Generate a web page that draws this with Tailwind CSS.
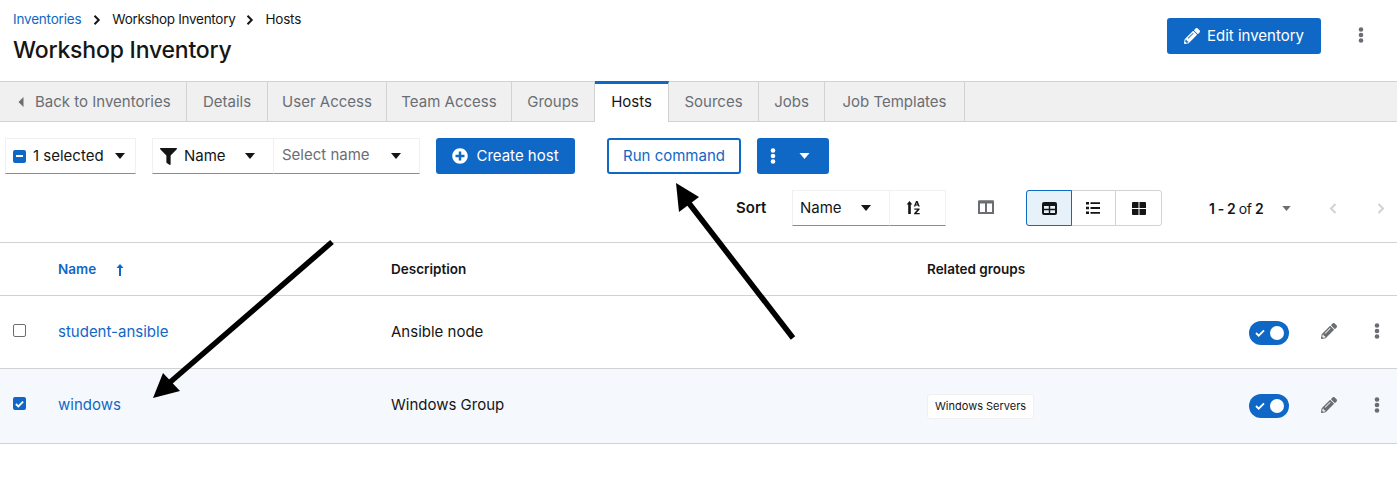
<!doctype html>
<html>
<head>
<meta charset="utf-8">
<script src="https://cdn.jsdelivr.net/npm/@tailwindcss/browser@4"></script>
</head>
<body class="m-0 bg-white font-['Inter','Noto_Sans',sans-serif] text-[15px] text-[#151515]">
<div class="relative w-[1397px] h-[482px] overflow-hidden">

<!-- header -->
<header class="flex h-[81px] justify-between">
  <div class="pl-[13px] pt-[11px]">
    <nav class="flex items-center h-[17px] text-[13.5px] tracking-[-0.2px]">
      <a class="text-[#1068c6]">Inventories</a>
      <svg class="ml-[12px] mr-[11px] w-[8px] h-[10px]" viewBox="0 0 8 10"><path d="M1.5 .8 5.7 5 1.5 9.2" fill="none" stroke="#151515" stroke-width="2"/></svg>
      <span class="tracking-[-0.3px]">Workshop Inventory</span>
      <svg class="mx-[11px] w-[8px] h-[10px]" viewBox="0 0 8 10"><path d="M1.5 .8 5.7 5 1.5 9.2" fill="none" stroke="#151515" stroke-width="2"/></svg>
      <span>Hosts</span>
    </nav>
    <h1 class="mt-[7px] text-[23px] leading-[30px] font-medium tracking-[-0.2px] text-[#151515]">Workshop Inventory</h1>
  </div>
  <div class="flex items-start pt-[18px] pr-[33px]">
    <button class="flex items-center justify-center gap-[7px] w-[154px] h-[36px] rounded-[3px] bg-[#1068c6] text-white">
      <svg class="w-[16px] h-[16px]" viewBox="0 0 512 512" fill="#fff"><path d="M497.9 142.1l-46.1 46.1c-4.7 4.7-12.3 4.7-17 0l-111-111c-4.7-4.7-4.7-12.3 0-17l46.1-46.1c18.7-18.7 49.1-18.7 67.9 0l60.1 60.1c18.8 18.7 18.8 49.1 0 67.9zM284.2 99.8L21.6 362.4.4 483.9c-2.9 16.4 11.4 30.6 27.8 27.8l121.5-21.3 262.6-262.6c4.7-4.7 4.7-12.3 0-17l-111-111c-4.8-4.7-12.4-4.7-17.1 0zM124.1 339.9c-5.5-5.5-5.5-14.3 0-19.8l154-154c5.5-5.5 14.3-5.5 19.8 0s5.5 14.3 0 19.8l-154 154c-5.5 5.5-14.3 5.5-19.8 0zM88 424h48v36.3l-64.5 11.3-31.1-31.1L51.7 376H88v48z"/></svg>
      Edit inventory
    </button>
    <svg class="ml-[37px] mt-[9px] w-[6px] h-[16px]" viewBox="0 0 6 16" fill="#6a6e73"><circle cx="3" cy="2.5" r="2.3"/><circle cx="3" cy="8" r="2.3"/><circle cx="3" cy="13.5" r="2.3"/></svg>
  </div>
</header>

<!-- tabs -->
<div class="flex h-[41px] bg-[#f0f0f0] border-y border-[#d2d2d2] text-[#6a6e73]">
  <div class="flex items-center gap-[11px] w-[187px] pl-[18px] pt-px border-r border-[#d2d2d2]">
    <svg class="w-[6px] h-[10px]" viewBox="0 0 6 10" fill="#6a6e73"><path d="M5.5 0v10L.5 5z"/></svg>
    <span>Back to Inventories</span>
  </div>
  <div class="flex items-center justify-center w-[81px] pt-px border-r border-[#d2d2d2]">Details</div>
  <div class="flex items-center justify-center w-[119px] pt-px border-r border-[#d2d2d2]">User Access</div>
  <div class="flex items-center justify-center w-[125px] pt-px border-r border-[#d2d2d2]">Team Access</div>
  <div class="flex items-center justify-center w-[83px] pt-px border-r border-[#d2d2d2]">Groups</div>
  <div class="relative z-10 flex items-center justify-center w-[74px] h-[41px] -mt-px pb-[2px] bg-white border-t-[3px] border-t-[#1068c6] border-r border-r-[#d2d2d2] text-[#151515]">Hosts</div>
  <div class="flex items-center justify-center w-[90px] pt-px border-r border-[#d2d2d2]">Sources</div>
  <div class="flex items-center justify-center w-[66px] pt-px border-r border-[#d2d2d2]">Jobs</div>
  <div class="flex items-center justify-center w-[140px] pt-px border-r border-[#d2d2d2]">Job Templates</div>
</div>

<!-- toolbar row 1 -->
<div class="flex items-start h-[36px] mt-[16px] pl-[5px]">
  <div class="flex items-center w-[131px] h-[36px] border border-[#f0f0f0] border-b-[#8a8d90] pl-[7px]">
    <span class="flex items-center justify-center w-[13px] h-[13px] rounded-[2px] bg-[#1068c6]"><span class="block w-[7px] h-[2px] bg-white"></span></span>
    <span class="ml-[7px]">1 selected</span>
    <svg class="ml-auto mr-[10px] w-[10px] h-[6px]" viewBox="0 0 10 6"><path d="M0 0h10L5 6z" fill="#151515"/></svg>
  </div>
  <div class="flex items-center w-[122px] h-[36px] ml-[16px] border border-[#f0f0f0] border-b-[#8a8d90] pl-[7px]">
    <svg class="w-[17px] h-[17px]" viewBox="0 0 512 512" fill="#151515"><path d="M487.976 0H24.028C2.71 0-8.047 25.866 7.058 40.971L192 225.941V432c0 7.831 3.821 15.17 10.237 19.662l80 55.98C298.02 518.69 320 507.493 320 487.98V225.941l184.947-184.97C520.021 25.896 509.338 0 487.976 0z"/></svg>
    <span class="ml-[7px]">Name</span>
    <svg class="ml-auto mr-[18px] w-[10px] h-[6px]" viewBox="0 0 10 6"><path d="M0 0h10L5 6z" fill="#151515"/></svg>
  </div>
  <div class="flex items-center w-[146px] h-[36px] border border-l-0 border-[#f0f0f0] border-b-[#8a8d90] pl-[8px]">
    <span class="text-[#6a6e73] mb-px">Select name</span>
    <svg class="ml-auto mr-[18px] w-[10px] h-[6px]" viewBox="0 0 10 6"><path d="M0 0h10L5 6z" fill="#151515"/></svg>
  </div>
  <button class="flex items-center justify-center gap-[8px] ml-[16px] w-[139px] h-[36px] rounded-[3px] bg-[#1068c6] text-white">
    <svg class="w-[16px] h-[16px]" viewBox="0 0 512 512" fill="#fff"><path d="M256 8C119 8 8 119 8 256s111 248 248 248 248-111 248-248S393 8 256 8zm144 276c0 6.6-5.4 12-12 12h-92v92c0 6.6-5.4 12-12 12h-56c-6.6 0-12-5.4-12-12v-92h-92c-6.6 0-12-5.4-12-12v-56c0-6.6 5.4-12 12-12h92v-92c0-6.6 5.4-12 12-12h56c6.6 0 12 5.4 12 12v92h92c6.6 0 12 5.4 12 12v56z"/></svg>
    Create host
  </button>
  <button class="ml-[32px] w-[134px] h-[36px] rounded-[3px] border-2 border-[#1068c6] bg-white text-[#1068c6]">Run command</button>
  <button class="flex items-center ml-[16px] w-[72px] h-[36px] rounded-[3px] bg-[#1068c6] pl-[13px]">
    <svg class="w-[6px] h-[16px]" viewBox="0 0 6 16" fill="#fff"><circle cx="3" cy="2.5" r="2.3"/><circle cx="3" cy="8" r="2.3"/><circle cx="3" cy="13.5" r="2.3"/></svg>
    <svg class="ml-[23px] w-[11px] h-[6px]" viewBox="0 0 10 6"><path d="M0 0h10L5 6z" fill="#fff"/></svg>
  </button>
</div>

<!-- toolbar row 2 -->
<div class="flex items-center h-[36px] mt-[16px] pl-[736px]">
  <span class="w-[33px] font-semibold whitespace-nowrap">Sort</span>
  <div class="flex items-center w-[98px] h-[36px] ml-[23px] border border-[#f0f0f0] border-b-[#8a8d90] pl-[7px]">
    <span>Name</span>
    <svg class="ml-auto mr-[18px] w-[10px] h-[6px]" viewBox="0 0 10 6"><path d="M0 0h10L5 6z" fill="#151515"/></svg>
  </div>
  <div class="flex items-center w-[56px] h-[36px] pl-[16px] border border-l-0 border-[#f0f0f0] border-b-[#8a8d90]">
    <svg class="w-[15px] h-[15px] mb-[2px]" viewBox="0 0 15 15" fill="#151515"><path d="M3.5 1 6.4 4.6H4.8V14H2.2V4.6H.6z"/><path d="M10 1h1.600l2.200 5.600h-1.500l-.3-1h-2.400l-.3 1H7.800zM10.800 2.800l-.6 1.800h1.200zM8.300 8.500h5.300v1.100L10.500 13h3.200v1.300H8.100v-1.100L11.200 9.800H8.300z"/></svg>
  </div>
  <svg class="ml-[32px] w-[16px] h-[14px] mb-[2px]" viewBox="0 0 16 14" fill="none" stroke="#6a6e73" stroke-width="2"><path d="M1 1.500h14v11.500H1z"/><path d="M8 1.500V13"/><path d="M1 2h14" stroke-width="3"/></svg>
  <div class="flex ml-[32px] h-[36px] w-[136px] rounded-[3px] border border-[#d2d2d2]">
    <span class="-m-px flex items-center justify-center w-[46px] h-[36px] rounded-l-[3px] border border-[#1068c6] bg-[#e7f1fa]">
      <svg class="w-[15px] h-[13px]" viewBox="0 0 15 13" fill="#151515"><path fill-rule="evenodd" d="M2 0h11a2 2 0 0 1 2 2v9a2 2 0 0 1-2 2H2a2 2 0 0 1-2-2V2a2 2 0 0 1 2-2zM2 4v2.800h4.800V4zm6.200 0v2.800H13V4zM2 8.200V11h4.800V8.200zm6.200 0V11H13V8.200z"/></svg>
    </span>
    <span class="flex items-center justify-center w-[45px] border-r border-[#d2d2d2]">
      <svg class="w-[14px] h-[12px]" viewBox="0 0 14 12" fill="#151515"><path d="M0 0h3v2.400H0zM4.500.300H14v1.800H4.500zM0 4.800h3v2.400H0zM4.500 5.100H14v1.800H4.500zM0 9.600h3V12H0zM4.500 9.900H14v1.800H4.500z"/></svg>
    </span>
    <span class="flex items-center justify-center flex-1">
      <svg class="w-[14px] h-[13px]" viewBox="0 0 14 13" fill="#151515"><path d="M1 0h5.500v6H0V1a1 1 0 0 1 1-1zM7.500 0H13a1 1 0 0 1 1 1v5H7.500zM0 7h6.500v6H1a1 1 0 0 1-1-1zM7.500 7H14v5a1 1 0 0 1-1 1H7.500z"/></svg>
    </span>
  </div>
  <span class="w-[54px] ml-[47px] text-[14px] tracking-[-0.4px] whitespace-nowrap"><b class="font-semibold">1 - 2</b> of <b class="font-semibold">2</b></span>
  <svg class="ml-[19px] w-[9px] h-[5px]" viewBox="0 0 10 6"><path d="M0 0h10L5 6z" fill="#6a6e73"/></svg>
  <svg class="ml-[38px] w-[8px] h-[11px]" viewBox="0 0 8 11"><path d="M6.500 1 2 5.500 6.500 10" fill="none" stroke="#d2d2d2" stroke-width="2"/></svg>
  <svg class="ml-[40px] w-[8px] h-[11px]" viewBox="0 0 8 11"><path d="M1.500 1 6 5.500 1.500 10" fill="none" stroke="#d2d2d2" stroke-width="2"/></svg>
</div>

<!-- table -->
<div class="mt-[16px] grid grid-cols-[58px_333px_536px_322px_148px] border-t border-[#d2d2d2]">
  <div class="contents text-[13.5px] font-semibold">
    <div class="h-[53px] border-b border-[#d2d2d2]"></div>
    <div class="h-[53px] pt-px border-b border-[#d2d2d2] flex items-center text-[#1068c6]">Name
      <svg class="ml-[20px] w-[8px] h-[12px]" viewBox="0 0 8 12" fill="#1068c6"><path d="M4 0l3.500 4H5v8H3V4H.5z"/></svg>
    </div>
    <div class="h-[53px] pt-px border-b border-[#d2d2d2] flex items-center">Description</div>
    <div class="h-[53px] pt-px border-b border-[#d2d2d2] flex items-center">Related groups</div>
    <div class="h-[53px] border-b border-[#d2d2d2]"></div>
  </div>

  <div class="contents">
    <div class="h-[73px] border-b border-[#d2d2d2] flex items-center pl-[13px]"><span class="block w-[13px] h-[13px] mb-[4px] rounded-[2px] border border-[#6a6e73] bg-white"></span></div>
    <div class="h-[73px] border-b border-[#d2d2d2] flex items-center text-[#1068c6]">student-ansible</div>
    <div class="h-[73px] border-b border-[#d2d2d2] flex items-center">Ansible node</div>
    <div class="h-[73px] border-b border-[#d2d2d2]"></div>
    <div class="h-[73px] border-b border-[#d2d2d2] flex items-center">
      <span class="flex items-center w-[40px] h-[24px] mt-[2px] rounded-full bg-[#1068c6] pl-[6px]">
        <svg class="w-[10px] h-[8px]" viewBox="0 0 10 8"><path d="M1 4l2.700 2.700L9 1.300" fill="none" stroke="#fff" stroke-width="1.800"/></svg>
        <span class="ml-[5px] block w-[14px] h-[14px] rounded-full bg-white"></span>
      </span>
      <svg class="ml-[32px] mb-[2px] w-[16px] h-[16px]" viewBox="0 0 512 512" fill="#6a6e73"><path d="M497.9 142.1l-46.1 46.1c-4.7 4.7-12.3 4.7-17 0l-111-111c-4.7-4.7-4.7-12.3 0-17l46.1-46.1c18.7-18.7 49.1-18.7 67.9 0l60.1 60.1c18.8 18.7 18.8 49.1 0 67.900zM284.2 99.8L21.6 362.4.4 483.9c-2.9 16.4 11.4 30.6 27.8 27.8l121.5-21.3 262.6-262.6c4.7-4.7 4.7-12.3 0-17l-111-111c-4.8-4.7-12.4-4.7-17.1 0zM124.1 339.9c-5.5-5.5-5.5-14.3 0-19.8l154-154c5.5-5.5 14.3-5.5 19.8 0s5.5 14.3 0 19.8l-154 154c-5.5 5.5-14.3 5.500-19.8 0zM88 424h48v36.3l-64.5 11.3-31.1-31.1L51.7 376H88v48z"/></svg>
      <svg class="ml-[37px] mb-[2px] w-[6px] h-[16px]" viewBox="0 0 6 16" fill="#6a6e73"><circle cx="3" cy="2.500" r="2.300"/><circle cx="3" cy="8" r="2.300"/><circle cx="3" cy="13.500" r="2.300"/></svg>
    </div>
  </div>

  <div class="contents">
    <div class="h-[75px] bg-[#f5f9fd] border-b border-[#d2d2d2] flex items-center pl-[13px]">
      <span class="flex items-center justify-center w-[13px] h-[13px] mb-[5px] rounded-[2px] bg-[#1068c6]"><svg class="w-[9px] h-[8px]" viewBox="0 0 10 8"><path d="M1 4l2.700 2.700L9 1.300" fill="none" stroke="#fff" stroke-width="2"/></svg></span>
    </div>
    <div class="h-[75px] pb-[2px] bg-[#f5f9fd] border-b border-[#d2d2d2] flex items-center text-[#1068c6]">windows</div>
    <div class="h-[75px] pb-[2px] bg-[#f5f9fd] border-b border-[#d2d2d2] flex items-center">Windows Group</div>
    <div class="h-[75px] bg-[#f5f9fd] border-b border-[#d2d2d2] flex items-center">
      <span class="flex items-center h-[25px] px-[7px] rounded-[3px] border border-[#f0f0f0] bg-white text-[11px]">Windows Servers</span>
    </div>
    <div class="h-[75px] bg-[#f5f9fd] border-b border-[#d2d2d2] flex items-center">
      <span class="flex items-center w-[40px] h-[24px] rounded-full bg-[#1068c6] pl-[6px]">
        <svg class="w-[10px] h-[8px]" viewBox="0 0 10 8"><path d="M1 4l2.700 2.700L9 1.300" fill="none" stroke="#fff" stroke-width="1.800"/></svg>
        <span class="ml-[5px] block w-[14px] h-[14px] rounded-full bg-white"></span>
      </span>
      <svg class="ml-[32px] mb-[3px] w-[16px] h-[16px]" viewBox="0 0 512 512" fill="#6a6e73"><path d="M497.9 142.1l-46.1 46.1c-4.7 4.7-12.3 4.7-17 0l-111-111c-4.7-4.7-4.7-12.3 0-17l46.1-46.1c18.7-18.7 49.1-18.7 67.9 0l60.1 60.1c18.8 18.7 18.8 49.1 0 67.900zM284.2 99.8L21.6 362.4.4 483.9c-2.9 16.4 11.4 30.6 27.8 27.8l121.5-21.3 262.6-262.6c4.7-4.7 4.7-12.3 0-17l-111-111c-4.8-4.7-12.4-4.7-17.1 0zM124.1 339.9c-5.5-5.5-5.5-14.3 0-19.8l154-154c5.5-5.5 14.3-5.5 19.8 0s5.5 14.3 0 19.8l-154 154c-5.5 5.5-14.3 5.500-19.8 0zM88 424h48v36.3l-64.5 11.3-31.1-31.1L51.7 376H88v48z"/></svg>
      <svg class="ml-[37px] mb-[3px] w-[6px] h-[16px]" viewBox="0 0 6 16" fill="#6a6e73"><circle cx="3" cy="2.500" r="2.300"/><circle cx="3" cy="8" r="2.300"/><circle cx="3" cy="13.500" r="2.300"/></svg>
    </div>
  </div>
</div>

<!-- annotation arrows -->
<svg class="absolute left-0 top-0 z-20 pointer-events-none" width="1397" height="482" viewBox="0 0 1397 482">
  <path d="M332 242 168 384" stroke="#000" stroke-width="5.500" fill="none"/>
  <path d="M153 398 163 373 180 391z" fill="#000"/>
  <path d="M793 338 688 202" stroke="#000" stroke-width="5.500" fill="none"/>
  <path d="M676 183 699 197 679 212z" fill="#000"/>
</svg>
</div>
</body>
</html>
